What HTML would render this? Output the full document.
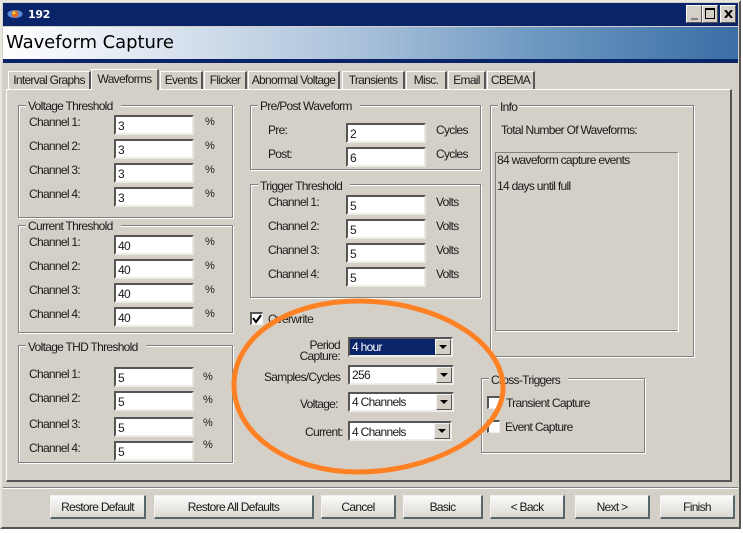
<!DOCTYPE html>
<html><head><meta charset="utf-8"><title>Waveform Capture</title>
<style>
html,body{margin:0;padding:0;background:#fff}
#w{position:relative;width:743px;height:533px;overflow:hidden;background:#fff;font:12px/14px "Liberation Sans",sans-serif;color:#1a1a1a;letter-spacing:-.7px}
#w div{position:absolute;box-sizing:border-box;white-space:nowrap}
.t{height:14px}
.g{border:1px solid #808080;box-shadow:1px 1px 0 #fff,inset 1px 1px 0 #fff}
.l{background:#d4d0c8;padding:0 8px 0 2px;height:14px}
.i{background:#fff;width:80px;height:20px;border-top:2px solid #555;border-left:2px solid #555;border-right:2px solid #e8e6e0;border-bottom:2px solid #eeece8;padding:2px 0 0 2px}
.b{background:linear-gradient(#fbfbfa,#dcd9d2);border-top:1px solid #eee;border-left:1px solid #f4f4f2;border-right:2px solid #55666c;border-bottom:2px solid #55666c;height:24px;text-align:center;line-height:23px}
.tab{background:#d4d0c8;border-top:1px solid #fff;border-left:1px solid #fff;border-right:2px solid #555;height:18px;top:71px;text-align:center;line-height:17px}
.c{background:#fff;border-top:2px solid #555;border-left:2px solid #555;border-right:2px solid #eeece8;border-bottom:2px solid #eeece8;padding:2px 0 0 2px;height:20px}
.d{width:16px;height:16px;top:0;right:0;background:#d4d0c8;border-top:1px solid #f4f4f2;border-left:1px solid #f4f4f2;border-right:1px solid #555;border-bottom:1px solid #555}
.d:after{content:"";position:absolute;left:3px;top:5px;border-left:4px solid transparent;border-right:4px solid transparent;border-top:4px solid #000}
.k{width:13px;height:13px;background:#fff;border-top:2px solid #555;border-left:2px solid #555;border-right:1px solid #eee;border-bottom:1px solid #eee}
.p{font-size:11px}
</style></head><body><div id="w">
<div style="left:0;top:0;width:741px;height:529px;background:#d4d0c8;border-top:2px solid #e8e6e0;border-left:2px solid #e8e6e0;border-right:2px solid #555;border-bottom:2px solid #555"></div>
<div style="left:3px;top:3px;width:735px;height:23px;background:#0a246a"></div>
<div style="left:3px;top:27px;width:735px;height:32px;background:linear-gradient(90deg,#fff 0,#dbe4ef 22%,#a6bfd9 50%,#6f99c2 72%,#3a6ea5 100%)"></div>
<div style="left:3px;top:59px;width:735px;height:4px;background:#0a246a"></div>
<svg style="position:absolute;left:7px;top:9px" width="17" height="11" viewBox="0 0 17 11"><ellipse cx="8" cy="5" rx="7.5" ry="4" fill="#5a8cd8"/><circle cx="8" cy="5" r="3.5" fill="#e86a20"/><circle cx="7" cy="4" r="1.5" fill="#ffd040"/></svg>
<div style="left:28px;top:8px;color:#fff;font:bold 11px/14px 'DejaVu Sans',sans-serif;letter-spacing:-.3px">192</div>
<div style="left:6px;top:32px;font:18px/22px 'DejaVu Sans',sans-serif;letter-spacing:-.05px;color:#000">Waveform Capture</div>

<div style="left:686px;top:5px;width:16px;height:18px;background:#d4d0c8;border-top:1px solid #fff;border-left:1px solid #fff;border-right:1px solid #555;border-bottom:1px solid #555"><div style="left:4px;top:12px;width:7px;height:2px;background:#808080"></div></div>
<div style="left:702px;top:5px;width:16px;height:18px;background:#d4d0c8;border-top:1px solid #fff;border-left:1px solid #fff;border-right:1px solid #555;border-bottom:1px solid #555"><div style="left:2px;top:2px;width:10px;height:11px;border:1px solid #000;border-top:2px solid #000"></div></div>
<div style="left:720px;top:5px;width:16px;height:18px;background:#d4d0c8;border-top:1px solid #fff;border-left:1px solid #fff;border-right:1px solid #555;border-bottom:1px solid #555"><svg style="position:absolute;left:3px;top:4px" width="9" height="8"><path d="M1 0L8 8M8 0L1 8" stroke="#000" stroke-width="2"/></svg></div>

<!-- panel -->
<div style="left:6px;top:89px;width:726px;height:393px;border-top:1px solid #fff;border-left:1px solid #fff;border-right:2px solid #555;border-bottom:2px solid #555"></div>
<div class="tab" style="left:8px;width:83px">Interval Graphs</div>
<div class="tab" style="left:160px;width:43px">Events</div>
<div class="tab" style="left:204px;width:43px">Flicker</div>
<div class="tab" style="left:248px;width:92px">Abnormal Voltage</div>
<div class="tab" style="left:342px;width:63px">Transients</div>
<div class="tab" style="left:406px;width:41px">Misc.</div>
<div class="tab" style="left:448px;width:38px">Email</div>
<div class="tab" style="left:487px;width:48px">CBEMA</div>
<div class="tab" style="left:91px;width:68px;top:69px;height:21px;border-right:2px solid #666;line-height:18px">Waveforms</div>

<!-- Voltage Threshold -->
<div class="g" style="left:18px;top:105px;width:215px;height:113px"></div>
<div class="l" style="left:26px;top:99px">Voltage Threshold</div>
<div class="t" style="left:29px;top:115px">Channel 1:</div><div class="i" style="left:114px;top:115px">3</div><div class="t p" style="left:205px;top:115px">%</div>
<div class="t" style="left:29px;top:139px">Channel 2:</div><div class="i" style="left:114px;top:139px">3</div><div class="t p" style="left:205px;top:139px">%</div>
<div class="t" style="left:29px;top:163px">Channel 3:</div><div class="i" style="left:114px;top:163px">3</div><div class="t p" style="left:205px;top:163px">%</div>
<div class="t" style="left:29px;top:187px">Channel 4:</div><div class="i" style="left:114px;top:187px">3</div><div class="t p" style="left:205px;top:187px">%</div>

<!-- Current Threshold -->
<div class="g" style="left:18px;top:225px;width:215px;height:108px"></div>
<div class="l" style="left:26px;top:219px">Current Threshold</div>
<div class="t" style="left:29px;top:235px">Channel 1:</div><div class="i" style="left:114px;top:235px">40</div><div class="t p" style="left:205px;top:235px">%</div>
<div class="t" style="left:29px;top:259px">Channel 2:</div><div class="i" style="left:114px;top:259px">40</div><div class="t p" style="left:205px;top:259px">%</div>
<div class="t" style="left:29px;top:283px">Channel 3:</div><div class="i" style="left:114px;top:283px">40</div><div class="t p" style="left:205px;top:283px">%</div>
<div class="t" style="left:29px;top:307px">Channel 4:</div><div class="i" style="left:114px;top:307px">40</div><div class="t p" style="left:205px;top:307px">%</div>

<!-- THD -->
<div class="g" style="left:18px;top:345px;width:215px;height:118px"></div>
<div class="l" style="left:26px;top:340px">Voltage THD Threshold</div>
<div class="t" style="left:29px;top:367px">Channel 1:</div><div class="i" style="left:114px;top:367px">5</div><div class="t p" style="left:203px;top:370px">%</div>
<div class="t" style="left:29px;top:391px">Channel 2:</div><div class="i" style="left:114px;top:391px">5</div><div class="t p" style="left:203px;top:393px">%</div>
<div class="t" style="left:29px;top:417px">Channel 3:</div><div class="i" style="left:114px;top:417px">5</div><div class="t p" style="left:203px;top:416px">%</div>
<div class="t" style="left:29px;top:441px">Channel 4:</div><div class="i" style="left:114px;top:441px">5</div><div class="t p" style="left:203px;top:438px">%</div>

<!-- Pre/Post -->
<div class="g" style="left:250px;top:105px;width:231px;height:65px"></div>
<div class="l" style="left:258px;top:99px">Pre/Post Waveform</div>
<div class="t" style="left:268px;top:123px">Pre:</div><div class="i" style="left:346px;top:123px">2</div><div class="t" style="left:436px;top:123px">Cycles</div>
<div class="t" style="left:268px;top:147px">Post:</div><div class="i" style="left:346px;top:147px">6</div><div class="t" style="left:436px;top:147px">Cycles</div>

<!-- Trigger -->
<div class="g" style="left:250px;top:184px;width:231px;height:114px"></div>
<div class="l" style="left:258px;top:179px">Trigger Threshold</div>
<div class="t" style="left:268px;top:195px">Channel 1:</div><div class="i" style="left:346px;top:195px">5</div><div class="t" style="left:436px;top:195px">Volts</div>
<div class="t" style="left:268px;top:219px">Channel 2:</div><div class="i" style="left:346px;top:219px">5</div><div class="t" style="left:436px;top:219px">Volts</div>
<div class="t" style="left:268px;top:243px">Channel 3:</div><div class="i" style="left:346px;top:243px">5</div><div class="t" style="left:436px;top:243px">Volts</div>
<div class="t" style="left:268px;top:267px">Channel 4:</div><div class="i" style="left:346px;top:267px">5</div><div class="t" style="left:436px;top:267px">Volts</div>

<!-- Overwrite -->
<div class="k" style="left:250px;top:312px"></div>
<svg style="position:absolute;left:252px;top:314px" width="10" height="10"><path d="M1 4L4 8L9 1" fill="none" stroke="#000" stroke-width="2"/></svg>
<div class="t" style="left:268px;top:312px">Overwrite</div>

<!-- Combos -->
<div class="t" style="left:280px;top:338px;width:60px;text-align:right">Period</div>
<div class="t" style="left:280px;top:349px;width:60px;text-align:right">Capture:</div>
<div class="c" style="left:348px;top:337px;width:105px"><div style="left:0;top:0;width:85px;height:16px;background:#0a246a;color:#fff;padding:1px 0 0 2px">4 hour</div><div class="d"></div></div>
<div class="t" style="left:264px;top:370px">Samples/Cycles</div>
<div class="c" style="left:348px;top:365px;width:106px"><div style="left:2px;top:1px">256</div><div class="d"></div></div>
<div class="t" style="left:300px;top:397px">Voltage:</div>
<div class="c" style="left:348px;top:392px;width:106px"><div style="left:2px;top:1px">4 Channels</div><div class="d"></div></div>
<div class="t" style="left:305px;top:425px">Current:</div>
<div class="c" style="left:348px;top:421px;width:104px"><div style="left:2px;top:2px">4 Channels</div><div class="d"></div></div>

<!-- Info -->
<div class="g" style="left:490px;top:105px;width:204px;height:252px"></div>
<div class="l" style="left:498px;top:100px;padding-right:2px">Info</div>
<div class="t" style="left:501px;top:123px">Total Number Of Waveforms:</div>
<div class="g" style="left:495px;top:152px;width:183px;height:179px;box-shadow:1px 1px 0 #fff;border-color:#808080 #d4d0c8 #808080 #808080"></div>
<div class="t" style="left:497px;top:153px">84 waveform capture events</div>
<div class="t" style="left:497px;top:179px">14 days until full</div>

<!-- Cross -->
<div class="g" style="left:481px;top:378px;width:164px;height:75px"></div>
<div class="l" style="left:489px;top:373px">Cross-Triggers</div>
<div class="k" style="left:487px;top:396px"></div>
<div class="t" style="left:506px;top:396px">Transient Capture</div>
<div class="k" style="left:487px;top:420px"></div>
<div class="t" style="left:505px;top:420px">Event Capture</div>

<!-- separator -->
<div style="left:3px;top:487px;width:735px;height:1px;background:#808080"></div>
<div style="left:3px;top:488px;width:735px;height:1px;background:#fff"></div>

<div class="b" style="left:50px;top:495px;width:96px">Restore Default</div>
<div class="b" style="left:154px;top:495px;width:160px">Restore All Defaults</div>
<div class="b" style="left:321px;top:495px;width:75px">Cancel</div>
<div class="b" style="left:403px;top:495px;width:80px">Basic</div>
<div class="b" style="left:490px;top:495px;width:75px">&lt; Back</div>
<div class="b" style="left:575px;top:495px;width:75px">Next &gt;</div>
<div class="b" style="left:660px;top:495px;width:75px">Finish</div>

<svg style="position:absolute;left:0;top:0" width="743" height="533"><path d="M234 385C234 335 290 301 358 301C435 301 503 340 503 388C503 435 430 472 358 472C290 472 234 435 234 385Z" fill="none" stroke="#ff8124" stroke-width="5"/></svg>
</div></body></html>
